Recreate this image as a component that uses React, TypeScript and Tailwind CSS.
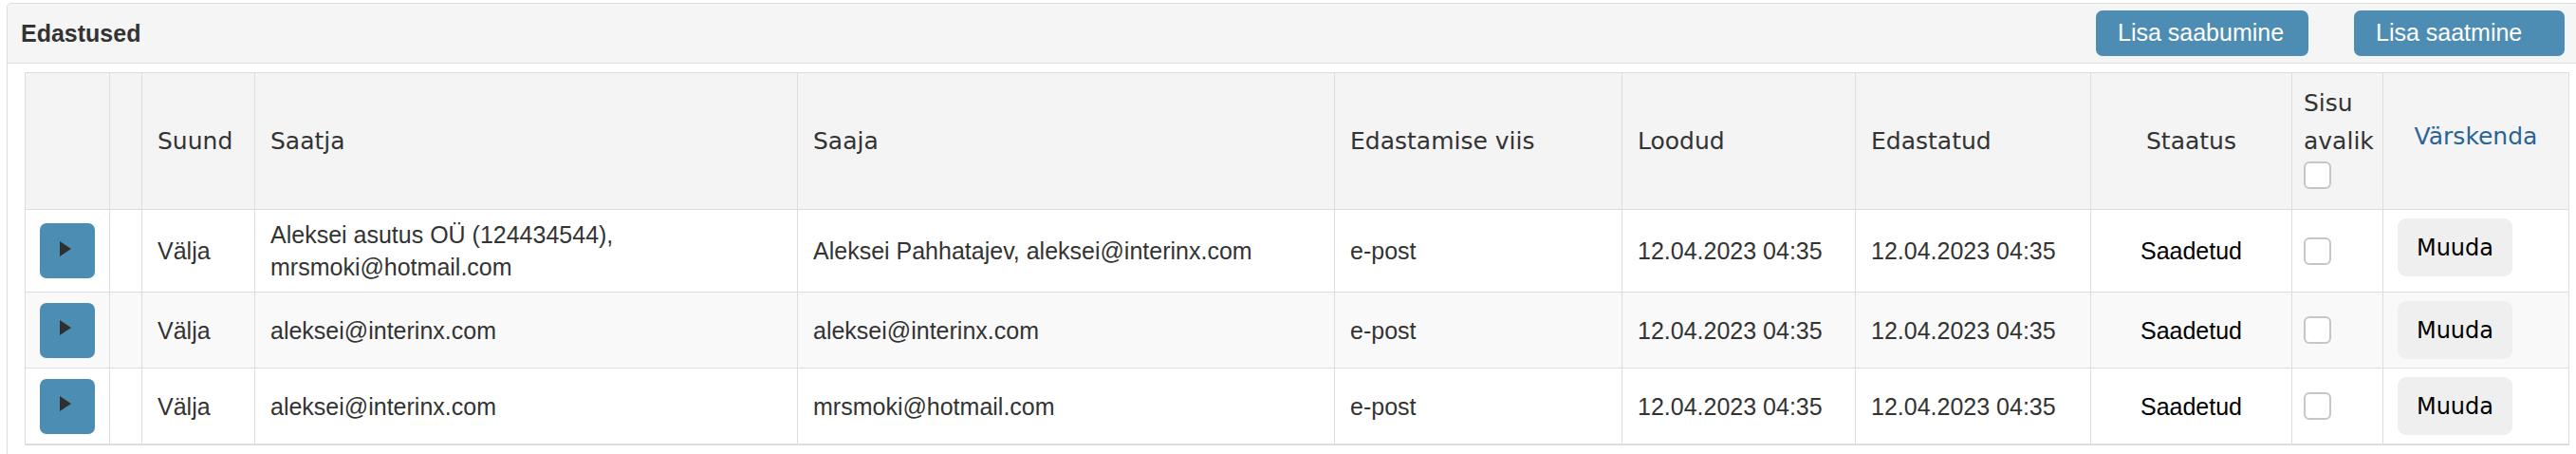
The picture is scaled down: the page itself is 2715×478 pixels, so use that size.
import { Fragment } from "react";

const rows = [
  {
    saatja: ["Aleksei asutus OÜ (124434544),", "mrsmoki@hotmail.com"],
    saaja: "Aleksei Pahhatajev, aleksei@interinx.com",
  },
  { saatja: ["aleksei@interinx.com"], saaja: "aleksei@interinx.com" },
  { saatja: ["aleksei@interinx.com"], saaja: "mrsmoki@hotmail.com" },
];

const colWidths = [89, 34, 119, 572, 566, 303, 246, 248, 212, 96, 196];

function PlayButton() {
  return (
    <button className="w-[58px] h-[58px] rounded-[7px] bg-[#4b8db3] flex items-center justify-center pr-[5px] pb-[5px]">
      <svg width="12" height="16" viewBox="0 0 12 16">
        <polygon points="0,0 12,8 0,16" fill="#2f2f2f" />
      </svg>
    </button>
  );
}

function Box() {
  return (
    <span className="block w-[29px] h-[29px] rounded-[6px] border-2 border-[#c6c6c6] bg-white" />
  );
}

export default function App() {
  const th = "border border-[#dddddd] px-4 font-normal text-left align-middle";
  const td = "border border-[#dddddd] px-4 py-[9px] align-middle";

  return (
    <div className="w-[2715px] h-[478px] overflow-hidden bg-white pl-[7px] pt-[3px] font-['Liberation_Sans',Arial,sans-serif] text-[#333]">
      <div className="w-[2710px] h-[520px] border border-[#dddddd] rounded-tl-[5px]">
        {/* panel heading */}
        <div className="h-[63px] bg-[#f5f5f5] border-b border-[#dddddd] rounded-tl-[5px] flex items-center pl-[14px] pr-[13px]">
          <h3 className="text-[25px] font-bold text-[#333] leading-none">Edastused</h3>
          <div className="ml-auto flex gap-[48px]">
            <button className="w-[224px] h-[48px] rounded-[7px] bg-[#4e8db3] text-white text-[25px] text-left pl-[23px]">
              Lisa saabumine
            </button>
            <button className="w-[222px] h-[48px] rounded-[7px] bg-[#4e8db3] text-white text-[25px] text-left pl-[23px]">
              Lisa saatmine
            </button>
          </div>
        </div>

        <div className="pt-[9px] pl-[18px]">
          <table className="w-[2681px] table-fixed border-collapse border-b-2 border-[#dddddd] text-[25px] leading-[34px]">
            <colgroup>
              {colWidths.map((w, i) => (
                <col key={i} style={{ width: w }} />
              ))}
            </colgroup>
            <thead className="font-['DejaVu_Sans',Verdana,sans-serif] text-[25px] leading-[37px]">
              <tr className="h-[144px] bg-[#f4f4f4]">
                <th className={th}></th>
                <th className={th}></th>
                <th className={th}>Suund</th>
                <th className={th}>Saatja</th>
                <th className={th}>Saaja</th>
                <th className={th}>Edastamise viis</th>
                <th className={th}>Loodud</th>
                <th className={th}>Edastatud</th>
                <th className={`${th} !text-center`}>Staatus</th>
                <th className="border border-[#dddddd] pl-3 pr-1 font-normal text-left align-middle leading-[40px] pb-[10px]">
                  <div>Sisu</div>
                  <div>avalik</div>
                  <div className="pt-[1px]">
                    <Box />
                  </div>
                </th>
                <th className={`${th} !text-center text-[#2a6496] pb-[10px]`}>Värskenda</th>
              </tr>
            </thead>
            <tbody>
              {rows.map((r, i) => (
                <tr key={i} className={i % 2 === 1 ? "bg-[#f9f9f9]" : "bg-white"}>
                  <td className="border border-[#dddddd] px-[15px] py-[9px] align-middle">
                    <PlayButton />
                  </td>
                  <td className={td}></td>
                  <td className={td}>Välja</td>
                  <td className={td}>
                    {r.saatja.map((l, j) => (
                      <Fragment key={j}>
                        {j > 0 && <br />}
                        {l}
                      </Fragment>
                    ))}
                  </td>
                  <td className={td}>{r.saaja}</td>
                  <td className={td}>e-post</td>
                  <td className={td}>12.04.2023 04:35</td>
                  <td className={td}>12.04.2023 04:35</td>
                  <td className={`${td} text-center text-black`}>Saadetud</td>
                  <td className="border border-[#dddddd] pl-3 pr-1 py-[9px] align-middle">
                    <Box />
                  </td>
                  <td className="border border-[#dddddd] pl-[15px] pr-4 py-[9px] align-top">
                    <button className="w-[121px] h-[61px] rounded-[9px] bg-[#efefef] text-black font-['DejaVu_Sans',Verdana,sans-serif] text-[24px]">
                      Muuda
                    </button>
                  </td>
                </tr>
              ))}
            </tbody>
          </table>
        </div>
      </div>
    </div>
  );
}
